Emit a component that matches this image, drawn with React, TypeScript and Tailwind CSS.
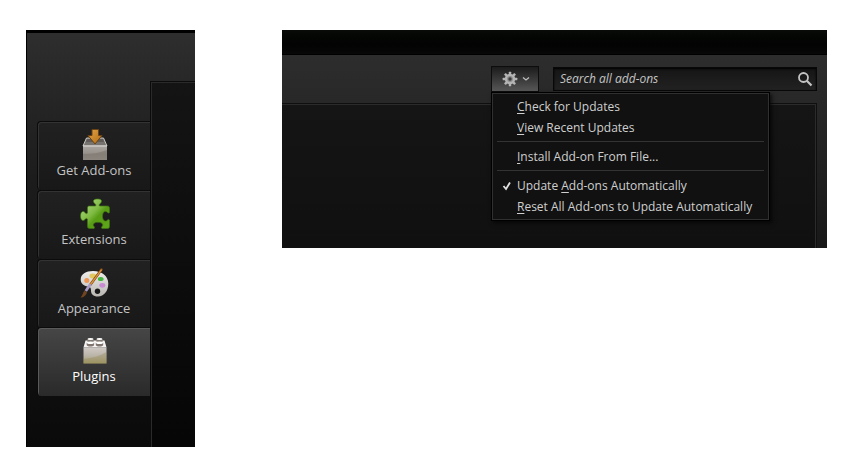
import type { ReactNode } from "react";

function GetAddonsIcon() {
  return (
    <svg width="32" height="32" viewBox="0 0 32 32" aria-hidden="true">
      <defs>
        <linearGradient id="boxFront" x1="0" y1="0" x2="0" y2="1">
          <stop offset="0" stopColor="#aaa5a0" />
          <stop offset="0.6" stopColor="#958f88" />
          <stop offset="1" stopColor="#a09a94" />
        </linearGradient>
        <linearGradient id="arrow" x1="0" y1="0" x2="1" y2="1">
          <stop offset="0" stopColor="#e3a548" />
          <stop offset="1" stopColor="#b06a12" />
        </linearGradient>
      </defs>
      <path d="M8.500 9h17l3.500 8H5z" fill="#77736f" stroke="#c9c6c3" />
      <path d="M9 10h16l1 3H8z" fill="#5f5c59" />
      <path d="M5 17h24v14H5z" fill="url(#boxFront)" />
      <path d="M5 17h24" stroke="#dedbd8" />
      <path d="M5 25c8 0 16-1 24-4v10H5z" fill="#6d665e" opacity="0.4" />
      <path d="M14 .5h6.500v6h3.500L17 15 10 6.500h4z" fill="url(#arrow)" stroke="#6b4312" />
    </svg>
  );
}

function ExtensionsIcon() {
  return (
    <svg width="32" height="32" viewBox="0 0 32 32" aria-hidden="true">
      <defs>
        <linearGradient id="puzzle" x1="0" y1="0" x2="1" y2="1">
          <stop offset="0" stopColor="#b5dc93" />
          <stop offset="0.45" stopColor="#7fbb42" />
          <stop offset="0.6" stopColor="#579c14" />
          <stop offset="1" stopColor="#5fa81a" />
        </linearGradient>
      </defs>
      <path
        d="M11.500 8h6c.8-1 .2-1.600-.6-2.300C14 3 15.500 1 19.500 1s5.500 2 2.600 4.700c-.8.7-1.400 1.300-.6 2.300H29c2 0 2.500.8 2.500 2.500v4c-.6 1-1.500.6-2.300-.2-2-2-4.700-.4-4.700 3.900s2.700 6 4.700 4c.8-.8 1.700-1.200 2.300-.2v6c0 2-.7 2.500-2.500 2.500h-5c-.9-.8-.5-1.400.2-2.200 1.500-1.800-.2-4-4.200-4s-5.700 2.200-4.200 4c.7.8 1.100 1.400.2 2.200h-4c-2 0-2.500-.7-2.500-2.500v-7c-1-1-1.600-.6-2.300.3C4.800 24 2.500 22 2.500 18s2.300-6 4.700-3.300c.7.900 1.300 1.300 2.300.3v-4.500c0-2 .5-2.500 2-2.500z"
        fill="url(#puzzle)"
        stroke="#3d7410"
        strokeWidth="0.7"
      />
    </svg>
  );
}

function AppearanceIcon() {
  return (
    <svg width="32" height="32" viewBox="0 0 32 32" aria-hidden="true">
      <defs>
        <linearGradient id="palette" x1="0" y1="0" x2="0" y2="1">
          <stop offset="0" stopColor="#efeeec" />
          <stop offset="1" stopColor="#b9b6b2" />
        </linearGradient>
      </defs>
      <path
        d="M2.700 12.500C2.700 7 8 4 15 4c9 0 15.300 5 15.300 12.500C30.300 24 26 29.500 20 29.500c-5 0-7-2.500-7-6 0-2.500-.5-3.500-3-4-4.500-.7-7.300-2.800-7.300-7z"
        fill="url(#palette)"
      />
      <circle cx="8.800" cy="13.500" r="2.500" fill="#ee9551" />
      <ellipse cx="14.700" cy="9" rx="3.200" ry="2.400" fill="#e2c75b" />
      <ellipse cx="22.700" cy="12" rx="2.900" ry="2" fill="#43b43c" />
      <ellipse cx="24.300" cy="18.300" rx="3" ry="2.400" fill="#c98bd3" />
      <circle cx="19.500" cy="24.200" r="2.700" fill="#171717" />
      <path d="M23.500 2.500 12.500 17.500" stroke="#7c4612" strokeWidth="2.600" strokeLinecap="round" />
      <path d="M23.300 3 12.500 17.500" stroke="#dc9338" strokeWidth="1.300" strokeLinecap="round" />
      <path d="M12.500 17 7.800 24" stroke="#a99ac5" strokeWidth="2.800" />
      <path d="M9 25.500 6.500 23.500C4.500 26 5 28 2.500 30.500c3 .3 5.500-2 6.500-5z" fill="#70441f" />
    </svg>
  );
}

function PluginsIcon() {
  return (
    <svg width="32" height="32" viewBox="0 0 32 32" aria-hidden="true">
      <defs>
        <linearGradient id="brick" x1="0" y1="0" x2="0" y2="1">
          <stop offset="0" stopColor="#d0cac6" />
          <stop offset="0.5" stopColor="#bbb4a8" />
          <stop offset="1" stopColor="#a59b68" />
        </linearGradient>
      </defs>
      <path d="M7.500 5.500h19l2 7h-23z" fill="#f6f4f2" />
      <path d="M9.500 4h6v3h-6zM18.500 4h6v3h-6z" fill="#847a74" />
      <ellipse cx="12.500" cy="4" rx="3" ry="1.100" fill="#fff" />
      <ellipse cx="21.500" cy="4" rx="3" ry="1.100" fill="#fff" />
      <path d="M8.700 7.700h7.400v2.500c-1 1.700-6.400 1.700-7.400 0zM17.800 7.700h7.400v2.500c-1 1.700-6.400 1.700-7.400 0z" fill="#80766f" />
      <ellipse cx="12.400" cy="7.800" rx="3.500" ry="1.300" fill="#fff" />
      <ellipse cx="21.500" cy="7.800" rx="3.500" ry="1.300" fill="#fff" />
      <path d="M5.500 12.500h23v16h-23z" fill="url(#brick)" />
      <path d="M5.500 24c9-1 16-3 23-7v11.500h-23z" fill="#8f8550" opacity="0.35" />
    </svg>
  );
}

function GearIcon() {
  return (
    <svg width="16" height="16" viewBox="0 0 16 16" aria-hidden="true">
      <g fill="#b4b4b4">
        {[0, 45, 90, 135].map((angle) => (
          <rect key={angle} x="6.800" y="0.700" width="2.400" height="14.600" rx="0.500" transform={`rotate(${angle} 8 8)`} />
        ))}
        <circle cx="8" cy="8" r="5.200" />
      </g>
      <circle cx="8" cy="8" r="2.900" fill="#8b8b8b" />
      <circle cx="8" cy="8" r="1.700" fill="#3c3c3c" />
    </svg>
  );
}

function Tab({ icon, label, selected = false }: { icon: ReactNode; label: string; selected?: boolean }) {
  return (
    <button
      type="button"
      role="tab"
      aria-selected={selected}
      className={
        "flex h-[69px] flex-col items-center rounded-l border border-r-0 border-b-0 pt-[7px] text-[13px] leading-[18px] " +
        (selected
          ? "-mt-px border-[#0b0b0b] bg-linear-to-b from-[#464646] to-[#2a2a2a] text-white shadow-[inset_1px_1px_0_#5a5a5a]"
          : "border-[#0b0b0b] bg-linear-to-b from-[#212121] to-[#181818] text-[#c4c4c4] shadow-[inset_1px_1px_0_#333333]")
      }
    >
      {icon}
      <span>{label}</span>
    </button>
  );
}

function Separator() {
  return <div role="separator" className="mx-1 mt-[3px] mb-1 h-px bg-[#333333]" />;
}

function MenuItem({ before = "", mnemonic, after, checked }: { before?: string; mnemonic: string; after: string; checked?: boolean }) {
  return (
    <button
      type="button"
      role={checked ? "menuitemcheckbox" : "menuitem"}
      aria-checked={checked}
      className="flex h-[21px] w-full items-center whitespace-nowrap text-left"
    >
      <span className="flex w-6 shrink-0 justify-center pl-1">
        {checked && (
          <svg width="10" height="10" viewBox="0 0 10 10" aria-hidden="true">
            <path d="M1.500 5 4 8l4-6.500" fill="none" stroke="#e0e0e0" strokeWidth="1.800" />
          </svg>
        )}
      </span>
      <span>
        {before}
        <span className="underline underline-offset-2">{mnemonic}</span>
        {after}
      </span>
    </button>
  );
}

export default function App() {
  return (
    <main className="flex min-h-screen items-start gap-[87px] bg-white pt-[30px] pr-[25px] pb-[25px] pl-[26px] font-['Open_Sans','Noto_Sans',sans-serif]">
      <section className="flex w-[169px] shrink-0 border-t-3 border-l border-black bg-linear-to-b from-[#2e2e2e] via-[#1c1c1c] via-35% to-[#0a0a0a]">
        <div role="tablist" aria-label="Categories" className="flex w-[123px] flex-col pt-[88px] pb-[51px] pl-[10px]">
          <Tab icon={<GetAddonsIcon />} label="Get Add-ons" />
          <Tab icon={<ExtensionsIcon />} label="Extensions" />
          <Tab icon={<AppearanceIcon />} label="Appearance" />
          <Tab icon={<PluginsIcon />} label="Plugins" selected />
        </div>
        <div className="mt-[48px] flex-1 border-t border-l border-[#0b0b0b] bg-linear-to-b from-[#141414] to-[#060606] shadow-[inset_1px_1px_0_#2a2a2a]" />
      </section>

      <section className="min-w-0 flex-1 bg-linear-to-b from-[#303030] to-[#181818]">
        <div className="h-[25px] border-b border-black bg-linear-to-b from-[#080b08] via-[#020302] via-60% to-[#080808]" />
        <div className="flex h-[48px] items-start justify-end gap-[14px] pt-[11px] pr-[10px]">
          <div className="relative">
            <button
              type="button"
              aria-label="Tools for all add-ons"
              aria-haspopup="menu"
              aria-expanded="true"
              className="flex h-[26px] w-[48px] items-center justify-center gap-1 border border-[#0d0d0d] bg-linear-to-b from-[#1c1c1c] to-[#575757] pl-[2px]"
            >
              <GearIcon />
              <svg width="8" height="8" viewBox="0 0 8 8" aria-hidden="true">
                <path d="m1 2.500 3 2.500 3-2.500" fill="none" stroke="#bdbdbd" strokeWidth="1.300" />
              </svg>
            </button>
            <div
              role="menu"
              className="absolute top-full left-0 z-10 w-[279px] border border-black bg-[#111111] px-px py-[3px] text-[12px] text-[#cfcfcf] shadow-[inset_0_0_0_1px_#303030,2px_2px_4px_#000000aa]"
            >
              <MenuItem mnemonic="C" after="heck for Updates" />
              <MenuItem mnemonic="V" after="iew Recent Updates" />
              <Separator />
              <MenuItem mnemonic="I" after="nstall Add-on From File..." />
              <Separator />
              <MenuItem before="Update " mnemonic="A" after="dd-ons Automatically" checked />
              <MenuItem mnemonic="R" after="eset All Add-ons to Update Automatically" />
            </div>
          </div>
          <div
            role="search"
            className="mt-px flex h-[24px] w-[264px] items-center border border-[#080808] bg-linear-to-b from-[#151515] to-[#222222] pr-[3px] pl-[6px] shadow-[inset_0_1px_2px_#000000]"
          >
            <input
              type="text"
              aria-label="Search all add-ons"
              placeholder="Search all add-ons"
              className="min-w-0 flex-1 bg-transparent text-[12px] text-[#cfcfcf] italic outline-none placeholder:text-[#c4c4c4]"
            />
            <svg width="16" height="16" viewBox="0 0 16 16" aria-hidden="true">
              <circle cx="6.500" cy="6.500" r="4.500" fill="none" stroke="#c4c4c4" strokeWidth="1.800" />
              <path d="m9.800 9.800 4.700 4.700" stroke="#c4c4c4" strokeWidth="2.200" />
            </svg>
          </div>
        </div>
        <div className="mr-[10px] h-[145px] border-t border-r border-[#0f0f0f] bg-linear-to-b from-[#151515] to-[#101010] shadow-[inset_-1px_1px_0_#2b2b2b]" />
      </section>
    </main>
  );
}
